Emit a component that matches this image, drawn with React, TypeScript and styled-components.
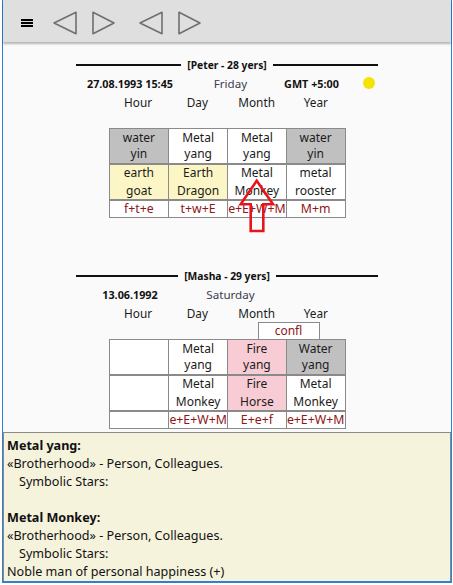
import React from "react";
import styled, { createGlobalStyle } from "styled-components";

const Global = createGlobalStyle`
  html, body { margin: 0; padding: 0; background: #ffffff; }
  body { font-family: "Noto Sans", "Open Sans", sans-serif; color: #1b1b1b; }
  * { box-sizing: border-box; }
`;

const Frame = styled.div`
  margin-left: 2px;
  width: 450px;
  border-left: 1px solid #2f7fd3;
  border-right: 1px solid #2f7fd3;
  border-bottom: 2px solid #2f7fd3;
  display: flex;
  flex-direction: column;
`;

const Toolbar = styled.div`
  height: 42px;
  background: #dfdfdf;
  box-shadow: 0 2px 2px rgba(0, 0, 0, 0.28);
  position: relative;
  z-index: 1;
  display: flex;
  align-items: center;
  padding: 3px 0 0 18px;
`;

const MenuIcon = styled.div`
  width: 12px;
  display: flex;
  flex-direction: column;
  gap: 1px;
  & > span { display: block; height: 2px; background: #000; }
`;

const NavButton = styled.svg<{ $ml: number }>`
  width: 24px;
  height: 24px;
  margin-left: ${(p) => p.$ml}px;
  flex: none;
`;

const Main = styled.div`
  position: relative;
  height: 390px;
  background: #fafafa;
  overflow: hidden;
  display: flex;
  flex-direction: column;
  align-items: center;
  gap: 49px;
  padding-top: 14px;
`;

const Section = styled.div`
  width: 302px;
  display: flex;
  flex-direction: column;
  align-items: center;
`;

const Header = styled.div`
  width: 302px;
  height: 18px;
  display: flex;
  align-items: center;
  & > i { flex: 1; height: 2px; background: #111; }
`;

const HeaderTitle = styled.span`
  font-weight: 700;
  font-size: 10.3px;
  padding: 0 6px;
  color: #111;
`;

const InfoRow = styled.div`
  width: 302px;
  height: 18px;
  display: grid;
  grid-template-columns: 108px 93px 69px 32px;
  align-items: center;
  text-align: center;
`;

const Strong = styled.span`
  font-weight: 700;
  font-size: 10.8px;
  color: #111;
`;

const Weekday = styled.span`
  font-size: 11.6px;
  color: #3c3c4e;
`;

const Dot = styled.span`
  width: 12px;
  height: 12px;
  border-radius: 50%;
  background: #f4e400;
  margin-left: 17px;
`;

const Labels = styled.div`
  width: 237px;
  height: 18px;
  margin-top: 1px;
  display: grid;
  grid-template-columns: repeat(4, 1fr);
  align-items: center;
  text-align: center;
  font-size: 11.8px;
  color: #1b1b1b;
`;

const ConflRow = styled.div`
  width: 237px;
  height: 17px;
  display: flex;
`;

const ConflBox = styled.div`
  margin-left: 149px;
  width: 62px;
  height: 17px;
  border: 1px solid #8a8a8a;
  border-bottom: none;
  background: #fff;
  color: #8e1616;
  font-size: 12px;
  line-height: 15px;
  text-align: center;
`;

const Table = styled.div`
  width: 237px;
  border: 1px solid #8a8a8a;
  background: #fff;
`;

const Row = styled.div<{ $first?: boolean }>`
  display: grid;
  grid-template-columns: repeat(4, 1fr);
  border-top: ${(p) => (p.$first ? "none" : "2px solid #8a8a8a")};
`;

const bgMap: Record<string, string> = {
  white: "#ffffff",
  gray: "#c0c0c0",
  yellow: "#fcf6c6",
  pink: "#f7ccd4",
};

const Cell = styled.div<{ $bg?: string; $kind: "stem" | "branch" | "mix" }>`
  border-left: 1px solid #8a8a8a;
  &:first-child { border-left: none; }
  background: ${(p) => bgMap[p.$bg || "white"]};
  height: ${(p) => (p.$kind === "mix" ? 16 : 34)}px;
  display: flex;
  flex-direction: column;
  align-items: center;
  justify-content: ${(p) => (p.$kind === "branch" ? "space-between" : "center")};
  font-size: ${(p) => (p.$kind === "mix" ? 12.3 : 12)}px;
  line-height: 16px;
  white-space: nowrap;
  color: ${(p) => (p.$kind === "mix" ? "#8e1616" : "#1b1b1b")};
`;

const Arrow = styled.svg`
  position: absolute;
  left: 234px;
  top: 134px;
  width: 40px;
  height: 60px;
`;

const Panel = styled.div`
  height: 149px;
  border: 1px solid #8a8a8a;
  border-bottom: none;
  background: #f6f3dd;
  padding: 4px 3px 0;
  font-size: 12.6px;
  line-height: 18px;
  color: #111;
  overflow: hidden;
`;

const Line = styled.div<{ $bold?: boolean; $indent?: boolean }>`
  height: 18px;
  font-weight: ${(p) => (p.$bold ? 700 : 400)};
  padding-left: ${(p) => (p.$indent ? 12 : 0)}px;
  white-space: nowrap;
`;

type C = { t: string[]; bg?: string };

const Grid = ({ rows }: { rows: [C[], C[], string[]] }) => (
  <Table>
    <Row $first>
      {rows[0].map((c, i) => (
        <Cell key={i} $bg={c.bg} $kind="stem">
          {c.t.map((s, j) => <span key={j}>{s}</span>)}
        </Cell>
      ))}
    </Row>
    <Row>
      {rows[1].map((c, i) => (
        <Cell key={i} $bg={c.bg} $kind="branch">
          {c.t.map((s, j) => <span key={j}>{s}</span>)}
        </Cell>
      ))}
    </Row>
    <Row>
      {rows[2].map((s, i) => (
        <Cell key={i} $kind="mix">{s}</Cell>
      ))}
    </Row>
  </Table>
);

const LeftTri = ({ ml }: { ml: number }) => (
  <NavButton $ml={ml} viewBox="0 0 24 24">
    <polygon points="1,12 23,1.3 23,22.7" fill="none" stroke="#6f6f6f" strokeWidth="1.6" strokeLinejoin="round" />
  </NavButton>
);
const RightTri = ({ ml }: { ml: number }) => (
  <NavButton $ml={ml} viewBox="0 0 24 24">
    <polygon points="1,1.3 22,12 1,22.7" fill="none" stroke="#6f6f6f" strokeWidth="1.6" strokeLinejoin="round" />
  </NavButton>
);

const LabelRow = () => (
  <Labels>
    <span>Hour</span>
    <span>Day</span>
    <span>Month</span>
    <span>Year</span>
  </Labels>
);

export default function App() {
  return (
    <>
      <Global />
      <Frame>
        <Toolbar>
          <MenuIcon>
            <span />
            <span />
            <span />
          </MenuIcon>
          <LeftTri ml={20} />
          <RightTri ml={15} />
          <LeftTri ml={23} />
          <RightTri ml={15} />
        </Toolbar>
        <Main>
          <Section>
            <Header>
              <i />
              <HeaderTitle>[Peter - 28 yers]</HeaderTitle>
              <i />
            </Header>
            <InfoRow>
              <Strong>27.08.1993 15:45</Strong>
              <Weekday>Friday</Weekday>
              <Strong>GMT +5:00</Strong>
              <Dot />
            </InfoRow>
            <LabelRow />
            <ConflRow />
            <Grid
              rows={[
                [
                  { t: ["water", "yin"], bg: "gray" },
                  { t: ["Metal", "yang"] },
                  { t: ["Metal", "yang"] },
                  { t: ["water", "yin"], bg: "gray" },
                ],
                [
                  { t: ["earth", "goat"], bg: "yellow" },
                  { t: ["Earth", "Dragon"], bg: "yellow" },
                  { t: ["Metal", "Monkey"] },
                  { t: ["metal", "rooster"] },
                ],
                ["f+t+e", "t+w+E", "e+E+W+M", "M+m"],
              ]}
            />
          </Section>
          <Section>
            <Header>
              <i />
              <HeaderTitle>[Masha - 29 yers]</HeaderTitle>
              <i />
            </Header>
            <InfoRow>
              <Strong>13.06.1992</Strong>
              <Weekday>Saturday</Weekday>
            </InfoRow>
            <LabelRow />
            <ConflRow>
              <ConflBox>confl</ConflBox>
            </ConflRow>
            <Grid
              rows={[
                [
                  { t: [] },
                  { t: ["Metal", "yang"] },
                  { t: ["Fire", "yang"], bg: "pink" },
                  { t: ["Water", "yang"], bg: "gray" },
                ],
                [
                  { t: [] },
                  { t: ["Metal", "Monkey"] },
                  { t: ["Fire", "Horse"], bg: "pink" },
                  { t: ["Metal", "Monkey"] },
                ],
                ["", "e+E+W+M", "E+e+f", "e+E+W+M"],
              ]}
            />
          </Section>
          <Arrow viewBox="0 0 40 60">
            <polygon
              points="19.7,4.7 36,28.3 26.3,28.3 26.3,55 13.7,55 13.7,28.3 3.7,28.3"
              fill="none"
              stroke="#e8141c"
              strokeWidth="2.6"
              strokeLinejoin="miter"
            />
          </Arrow>
        </Main>
        <Panel>
          <Line $bold>Metal yang:</Line>
          <Line>«Brotherhood» - Person, Colleagues.</Line>
          <Line $indent>Symbolic Stars:</Line>
          <Line />
          <Line $bold>Metal Monkey:</Line>
          <Line>«Brotherhood» - Person, Colleagues.</Line>
          <Line $indent>Symbolic Stars:</Line>
          <Line>Noble man of personal happiness (+)</Line>
        </Panel>
      </Frame>
    </>
  );
}
